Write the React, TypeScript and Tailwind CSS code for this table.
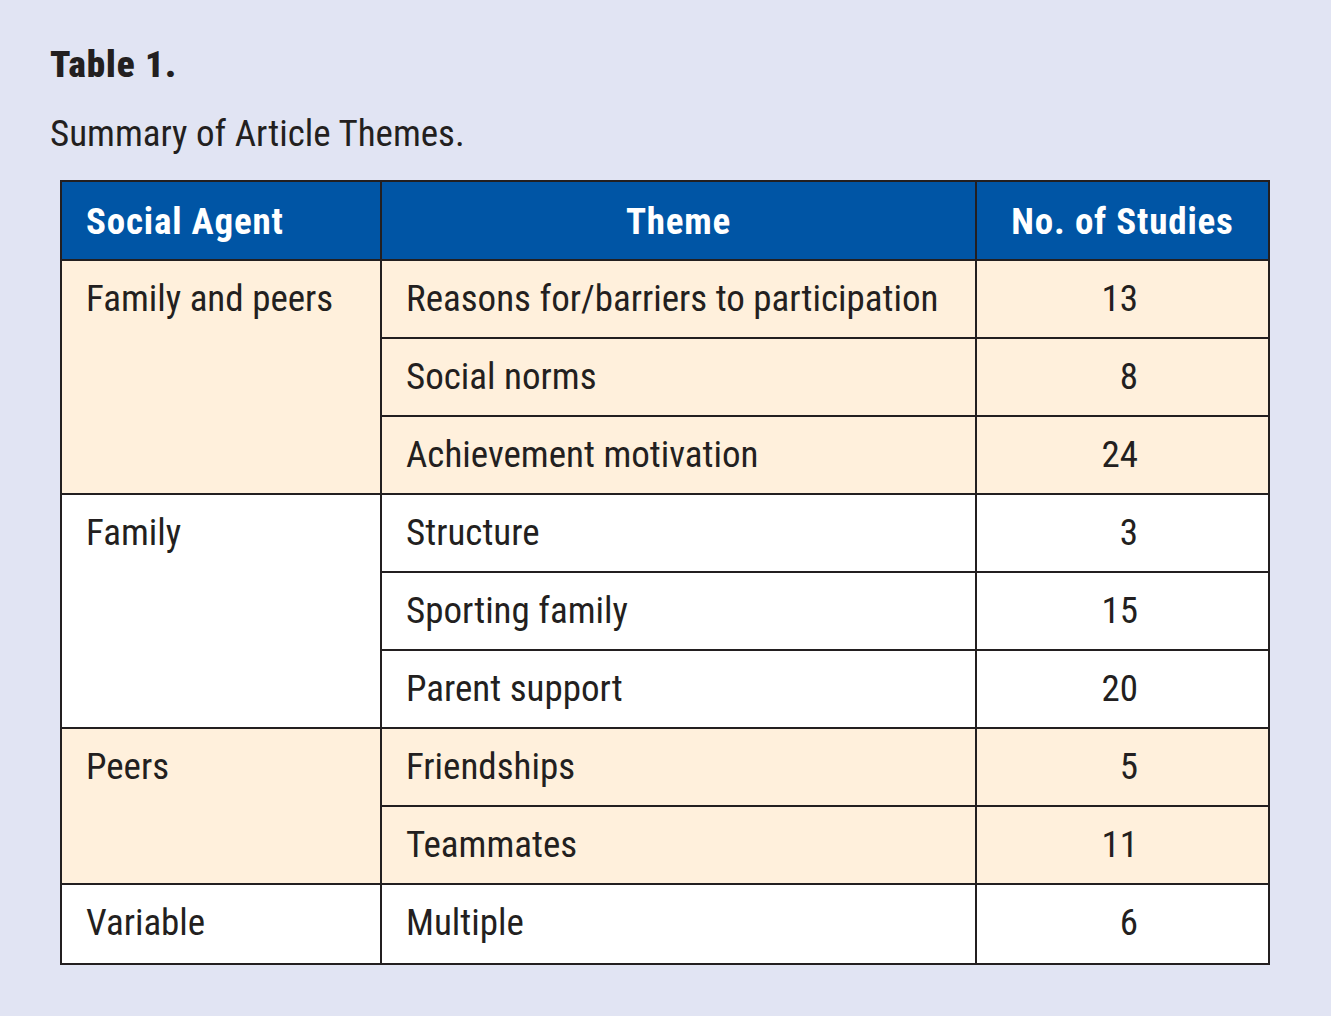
const rows = [
  { agent: "Family and peers", tint: true, items: [
    ["Reasons for/barriers to participation", "13"],
    ["Social norms", "8"],
    ["Achievement motivation", "24"],
  ] },
  { agent: "Family", tint: false, items: [
    ["Structure", "3"],
    ["Sporting family", "15"],
    ["Parent support", "20"],
  ] },
  { agent: "Peers", tint: true, items: [
    ["Friendships", "5"],
    ["Teammates", "11"],
  ] },
  { agent: "Variable", tint: false, items: [["Multiple", "6"]] },
];

const spans: Record<number, string> = {
  1: "row-span-1",
  2: "row-span-2",
  3: "row-span-3",
};

export default function App() {
  return (
    <div
      className="min-h-screen w-full bg-[#e1e4f3] pl-[50px] pt-[45px] text-[#231f20] font-stretch-condensed"
      style={{ fontFamily: '"Roboto Condensed", Roboto, sans-serif' }}
    >
      <h1 className="text-[37px] font-black leading-[40px] tracking-[1px]">Table 1.</h1>
      <p className="mt-[29px] text-[37px] leading-[40px]">Summary of Article Themes.</p>

      <div className="ml-[10px] mt-[26px] grid w-[1210px] grid-cols-[320px_595px_291px] border-2 border-[#231f20] text-[37px] leading-[40px]">
        {/* Header */}
        <div className="h-[79px] border-b-2 border-r-2 border-[#231f20] bg-[#0055a5] pl-[24px] pt-[20px] font-bold tracking-[0.8px] text-white">
          Social Agent
        </div>
        <div className="h-[79px] border-b-2 border-r-2 border-[#231f20] bg-[#0055a5] pt-[20px] text-center font-bold tracking-[0.8px] text-white">
          Theme
        </div>
        <div className="h-[79px] border-b-2 border-[#231f20] bg-[#0055a5] pt-[20px] text-center font-bold tracking-[0.8px] text-white">
          No. of Studies
        </div>

        {rows.map((group, gi) => {
          const bg = group.tint ? "bg-[#fff0dc]" : "bg-white";
          const lastGroup = gi === rows.length - 1;
          return (
            <div key={group.agent} className="contents">
              <div
                className={`${spans[group.items.length]} border-r-2 border-[#231f20] pl-[24px] pt-[18px] ${bg} ${lastGroup ? "" : "border-b-2"}`}
              >
                {group.agent}
              </div>
              {group.items.map(([theme, count], ii) => {
                const last = lastGroup && ii === group.items.length - 1;
                return (
                  <div key={theme} className="contents">
                    <div className={`h-[78px] border-r-2 border-[#231f20] pl-[24px] pt-[18px] ${bg} ${last ? "" : "border-b-2"}`}>
                      {theme}
                    </div>
                    <div className={`h-[78px] border-[#231f20] pr-[130px] pt-[18px] text-right ${bg} ${last ? "" : "border-b-2"}`}>
                      {count}
                    </div>
                  </div>
                );
              })}
            </div>
          );
        })}
      </div>
    </div>
  );
}
